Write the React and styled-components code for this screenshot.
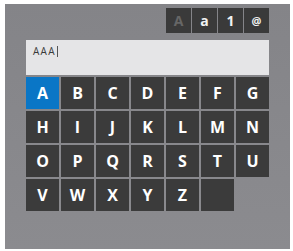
import React from "react";
import styled, { createGlobalStyle } from "styled-components";

const Global = createGlobalStyle`
  html, body { margin: 0; padding: 0; background: #ffffff; }
  body { font-family: "Open Sans", "Liberation Sans", sans-serif; }
`;

const Panel = styled.div`
  margin: 4px 0 0 5px;
  width: 285px;
  height: 245px;
  box-sizing: border-box;
  padding: 4px 21px 0 21px;
  background: linear-gradient(#848488, #8b8b8f);
  display: flex;
  flex-direction: column;
`;

const TabRow = styled.div`
  display: flex;
  justify-content: flex-end;
  gap: 1px;
`;

const Tab = styled.div`
  width: 25px;
  height: 25px;
  background: #3a3a3a;
  color: ${(p) => (p.$dim ? "#666666" : "#f2f2f2")};
  font-weight: 700;
  font-size: ${(p) => (p.$small ? "11px" : "14px")};
  display: flex;
  align-items: center;
  justify-content: center;
`;

const Field = styled.div`
  margin-top: 7px;
  height: 35px;
  background: #e5e5e7;
  box-sizing: border-box;
  padding: 5px 7px;
  font-size: 10px;
  line-height: 12px;
  letter-spacing: 1.3px;
  color: #3a3a3a;
  display: flex;
  align-items: flex-start;
`;

const Caret = styled.span`
  display: inline-block;
  width: 1px;
  height: 11px;
  background: #555;
  margin-left: 1px;
  margin-top: 1px;
`;

const Grid = styled.div`
  margin-top: 2px;
  width: 245px;
  display: grid;
  grid-template-columns: repeat(7, 33px);
  grid-auto-rows: 32px;
  column-gap: 2px;
  row-gap: 2px;
`;

const Key = styled.div`
  background: ${(p) => (p.$active ? "#0a76c6" : "#3b3b3b")};
  color: #ffffff;
  font-weight: 700;
  font-size: 16px;
  display: flex;
  align-items: center;
  justify-content: center;
`;

const letters = "ABCDEFGHIJKLMNOPQRSTUVWXYZ".split("");

export default function App() {
  return (
    <>
      <Global />
      <Panel>
        <TabRow>
          <Tab $dim>A</Tab>
          <Tab>a</Tab>
          <Tab>1</Tab>
          <Tab $small>@</Tab>
        </TabRow>
        <Field>
          AAA<Caret />
        </Field>
        <Grid>
          {letters.map((l, i) => (
            <Key key={l} $active={i === 0}>
              {l}
            </Key>
          ))}
          <Key />
        </Grid>
      </Panel>
    </>
  );
}
